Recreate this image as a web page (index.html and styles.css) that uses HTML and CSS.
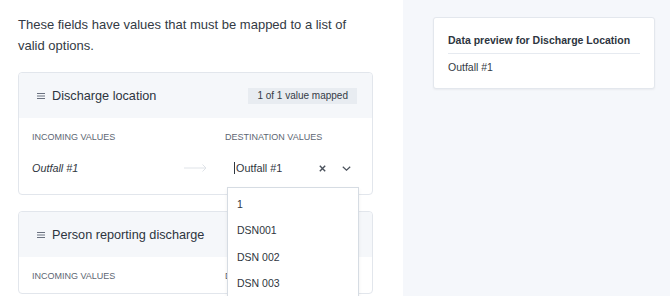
FILE: index.html
```html
<!DOCTYPE html>
<html lang="en">
<head>
    <meta charset="UTF-8">
    <meta name="viewport" content="width=device-width, initial-scale=1.0">
    <title>Map Values</title>
    <link rel="stylesheet" href="styles.css">
</head>
<body>
    <div class="layout">
        <div class="main">
            <p class="intro">These fields have values that must be mapped to a list of valid options.</p>

            <div class="field-card">
                <div class="field-header">
                    <div class="field-title">
                        <svg class="list-icon" width="8" height="6" viewBox="0 0 8 6"><path d="M0 0.5H8M0 3H8M0 5.5H8" stroke="#6b7280" stroke-width="1"/></svg>
                        <span>Discharge location</span>
                    </div>
                    <span class="badge">1 of 1 value mapped</span>
                </div>
                <div class="field-body">
                    <div class="col-label">Incoming values</div>
                    <div class="col-label">Destination values</div>
                    <div class="incoming">
                        <span class="incoming-value">Outfall #1</span>
                        <svg class="arrow" width="23" height="8" viewBox="0 0 23 8"><path d="M0 4H22M18.5 0.5L22 4L18.5 7.5" fill="none" stroke="#dfe3e8" stroke-width="1"/></svg>
                    </div>
                    <div class="select">
                        <span class="cursor"></span>
                        <span class="select-value">Outfall #1</span>
                        <svg class="clear" width="7" height="7" viewBox="0 0 7 7"><path d="M0.8 0.8L6.2 6.2M6.2 0.8L0.8 6.2" stroke="#4a515c" stroke-width="1.4"/></svg>
                        <svg class="chevron" width="9" height="5" viewBox="0 0 9 5"><path d="M0.8 0.8L4.5 4.2L8.2 0.8" fill="none" stroke="#4a515c" stroke-width="1.2"/></svg>
                        <ul class="menu">
                            <li>1</li>
                            <li>DSN001</li>
                            <li>DSN 002</li>
                            <li>DSN 003</li>
                        </ul>
                    </div>
                </div>
            </div>

            <div class="field-card">
                <div class="field-header">
                    <div class="field-title">
                        <svg class="list-icon" width="8" height="6" viewBox="0 0 8 6"><path d="M0 0.5H8M0 3H8M0 5.5H8" stroke="#6b7280" stroke-width="1"/></svg>
                        <span>Person reporting discharge</span>
                    </div>
                </div>
                <div class="field-body">
                    <div class="col-label">Incoming values</div>
                    <div class="col-label">Destination values</div>
                </div>
            </div>
        </div>

        <div class="side">
            <div class="preview-card">
                <div class="preview-title">Data preview for Discharge Location</div>
                <div class="preview-value">Outfall #1</div>
            </div>
        </div>
    </div>
</body>
</html>
```

FILE: styles.css
```css
html, body {
    margin: 0;
    padding: 0;
    height: 100%;
    overflow: hidden;
}
body {
    font-family: "Liberation Sans", Arial, sans-serif;
    color: #2f3640;
    background-color: #ffffff;
}
.layout {
    display: flex;
    min-height: 100vh;
}
.main {
    width: 403px;
    box-sizing: border-box;
    padding: 14px 30px 0 18px;
    background-color: #ffffff;
}
.intro {
    margin: 0 0 16px 0;
    font-size: 13px;
    line-height: 21px;
    color: #333a44;
}
.field-card {
    border: 1px solid #e2e6ec;
    border-radius: 4px;
    margin-bottom: 16px;
    background-color: #ffffff;
}
.field-header {
    display: flex;
    align-items: center;
    justify-content: space-between;
    height: 45px;
    padding: 0 15px 0 18px;
    background-color: #f5f7fa;
    border-radius: 4px 4px 0 0;
}
.field-title {
    display: flex;
    align-items: center;
    gap: 7px;
    font-size: 12.7px;
    color: #2d3540;
}
.badge {
    font-size: 10px;
    line-height: 16px;
    padding: 0 9px;
    background-color: #e8ecf1;
    color: #343b46;
}
.field-body {
    display: grid;
    grid-template-columns: 193px 1fr;
    row-gap: 10px;
    padding: 13px 14px 11px 13px;
}
.col-label {
    font-size: 9px;
    line-height: 12px;
    text-transform: uppercase;
    color: #5d6673;
}
.incoming {
    display: flex;
    align-items: center;
    justify-content: space-between;
    height: 30px;
    padding-right: 18px;
}
.incoming-value {
    font-size: 10.8px;
    font-style: italic;
    color: #2f3640;
}
.select {
    position: relative;
    display: flex;
    align-items: center;
    width: 134px;
    height: 30px;
    box-sizing: border-box;
    padding: 0 8px 0 9px;
    font-size: 10.8px;
    color: #2f3640;
}
.cursor {
    width: 1px;
    height: 12px;
    background-color: #2f3640;
    margin-right: 1px;
}
.select-value {
    flex: 1;
}
.clear {
    margin-right: 16px;
}
.menu {
    position: absolute;
    top: calc(100% + 4px);
    left: 2px;
    right: 0;
    height: 120px;
    margin: 0;
    padding: 3px 0 0 0;
    list-style: none;
    background-color: #ffffff;
    border: 1px solid #d6dce3;
    box-shadow: 0 2px 4px rgba(0, 0, 0, 0.06);
    z-index: 2;
}
.menu li {
    font-size: 10.5px;
    line-height: 26.3px;
    padding-left: 9px;
    color: #2f3640;
}
.side {
    flex: 1;
    padding: 17px 15px 0 30px;
    background-color: #f5f7fb;
}
.preview-card {
    padding: 15px 14px 14px 14px;
    background-color: #ffffff;
    border: 1px solid #e3e7ed;
    border-radius: 3px;
    box-shadow: 0 1px 2px rgba(0, 0, 0, 0.05);
}
.preview-title {
    font-size: 10.5px;
    font-weight: bold;
    line-height: 14px;
    padding-bottom: 6px;
    border-bottom: 1px solid #e6eaf0;
    color: #2d3540;
}
.preview-value {
    font-size: 10.5px;
    line-height: 14px;
    margin-top: 6px;
    color: #333a44;
}
```
